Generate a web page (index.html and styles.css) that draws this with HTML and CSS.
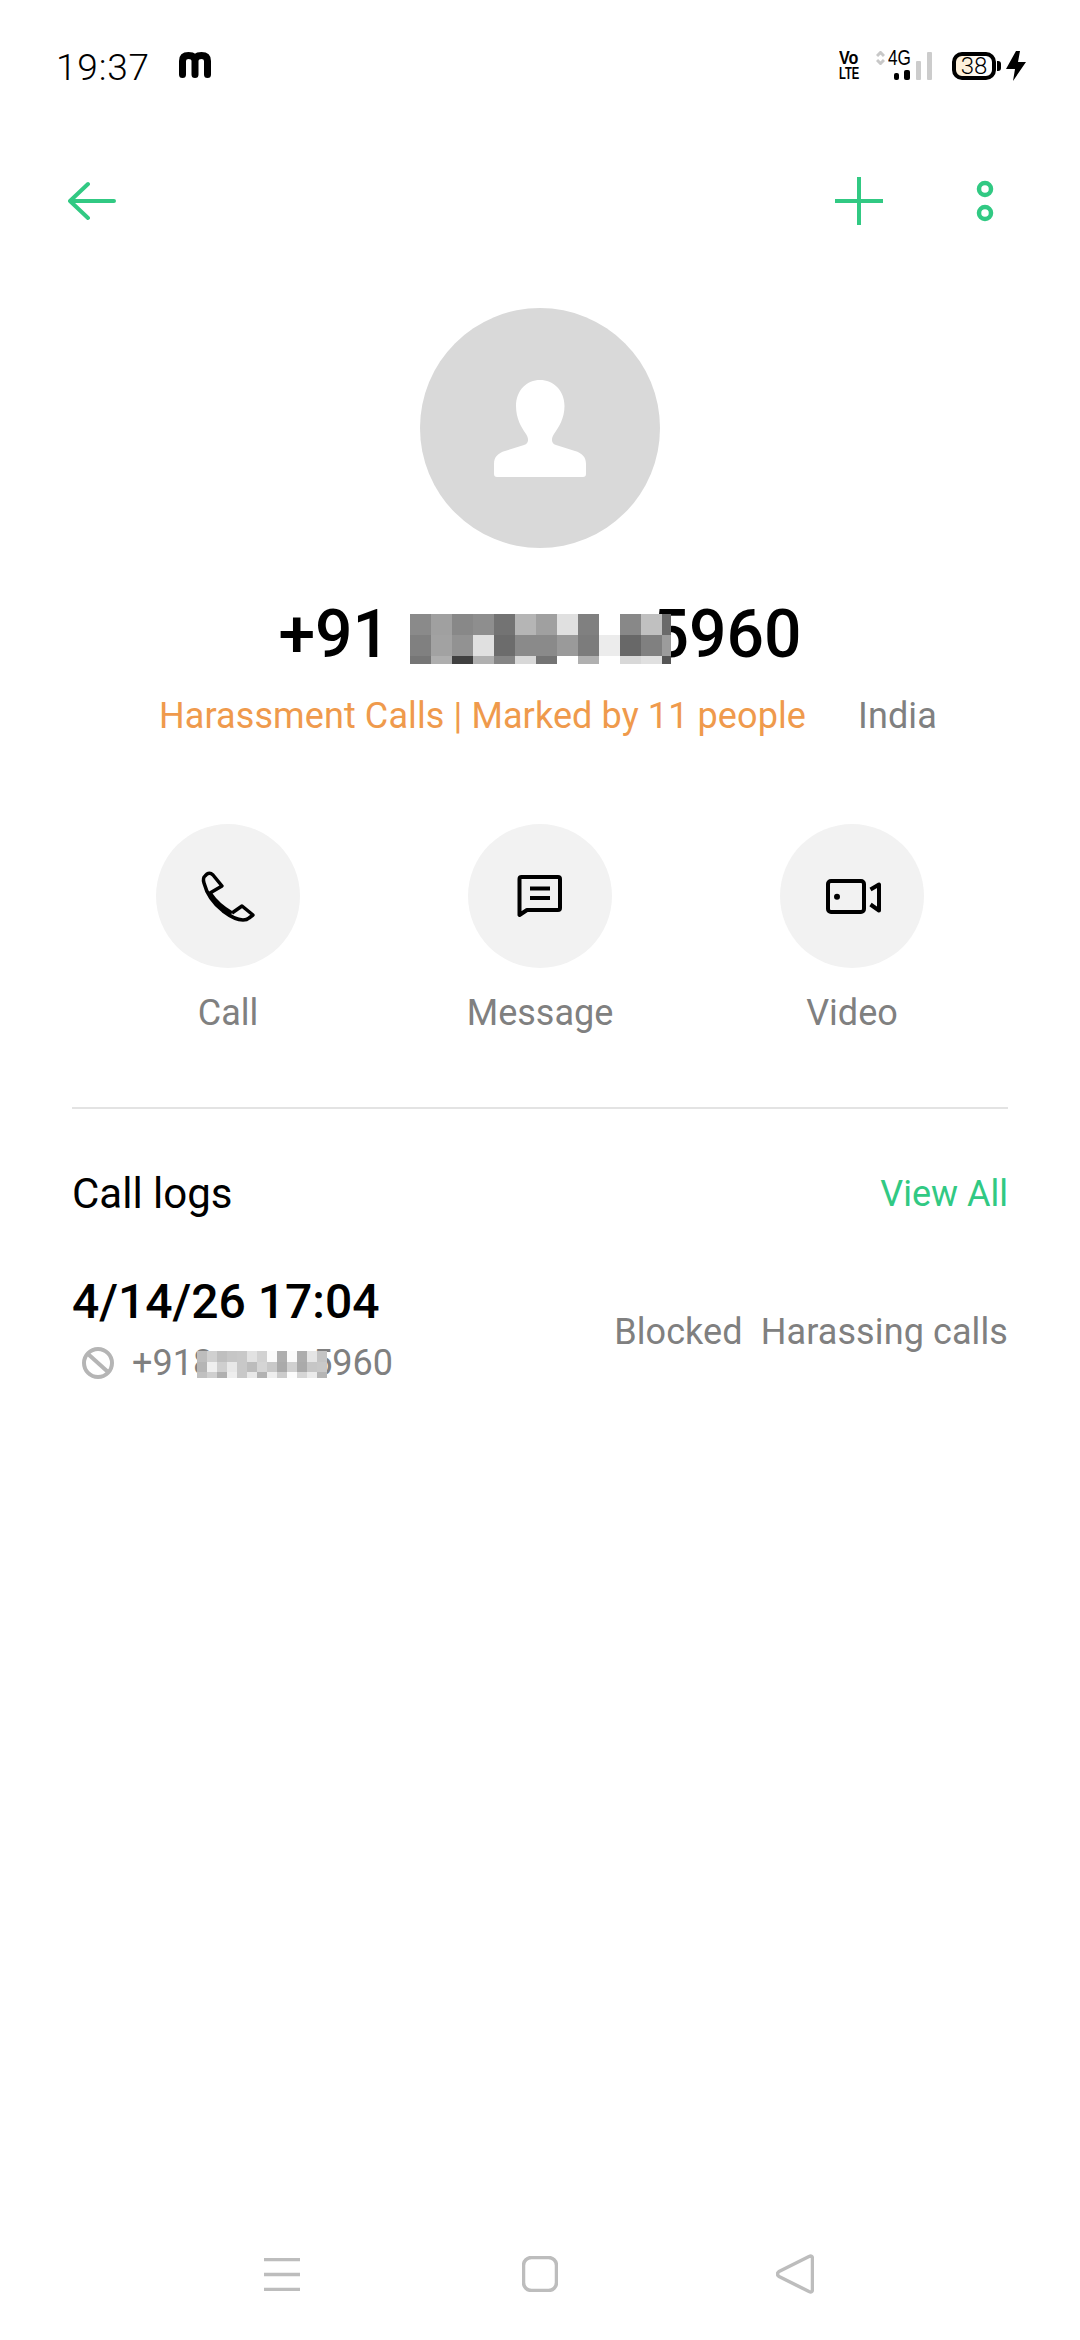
FILE: index.html
```html
<!DOCTYPE html>
<html>
<head>
  <title>Contact details</title>
  <link rel="stylesheet" href="styles.css">
</head>
<body>
  <div class="screen">
    <div class="status">
      <span class="time">19:37</span>
      <svg class="app-m" width="32" height="26" viewBox="0 0 32 26"><path d="M3.5 22.5V9Q3.5 3.5 9.5 3.5Q16 3.5 16 9V22.5M16 9Q16 3.5 22.5 3.5Q28.5 3.5 28.5 9V22.5"/></svg>
      <div class="status-right">
        <div class="volte">
          <span class="vo">Vo</span>
          <span class="lte">LTE</span>
        </div>
        <svg class="net-arrows" width="9" height="14" viewBox="0 0 9 14"><path d="M1 5l3.5-3.5L8 5M1 9l3.5 3.5L8 9"/></svg>
        <div class="signal">
          <span class="net-4g">4G</span>
          <svg width="44" height="30" viewBox="0 0 44 30">
            <rect x="6" y="22" width="5" height="7" rx="2" fill="#000"/>
            <rect x="16" y="19" width="6" height="10" rx="2" fill="#000"/>
            <rect x="28" y="10" width="5" height="19" rx="1" fill="#cccccc"/>
            <rect x="39" y="1" width="5" height="28" rx="1" fill="#cccccc"/>
          </svg>
        </div>
        <div class="battery">38</div>
        <svg class="bolt" width="20" height="30" viewBox="0 0 20 30"><polygon points="10,0 14,0 12,11 20,11 7,30 9,18 0,18"/></svg>
      </div>
    </div>

    <div class="toolbar">
      <svg width="48" height="40" viewBox="0 0 48 40"><path class="green-line" d="M2 20H46M20 3L2 20L20 37"/></svg>
      <div class="toolbar-right">
        <svg width="48" height="48" viewBox="0 0 48 48"><path class="green-plus" d="M24 0V48M0 24H48"/></svg>
        <svg width="18" height="42" viewBox="0 0 18 42"><circle class="green-dot" cx="9" cy="9" r="6"/><circle class="green-dot" cx="9" cy="33" r="6"/></svg>
      </div>
    </div>

    <div class="avatar">
      <svg width="92" height="97" viewBox="494 379 92 97"><path fill="#fff" d="M540 379C553 379 564.5 389 564.5 405C564.5 417 559 426 554 433C551 438 551 442 556 444L575 450C582 452 586 456 586 463V473Q586 476 583 476H497Q494 476 494 473V463C494 456 498 452 505 450L524 444C529 442 529 438 526 433C521 426 516 417 516 405C516 389 527 379 540 379Z"/></svg>
    </div>

    <div class="name">+91 <svg class="mosaic" width="261" height="50" viewBox="0 0 261 50" shape-rendering="crispEdges">
      <rect x="0" y="0" width="21" height="21" fill="#8a8a8a"/><rect x="21" y="0" width="21" height="21" fill="#a0a0a0"/><rect x="42" y="0" width="21" height="21" fill="#888888"/><rect x="63" y="0" width="21" height="21" fill="#8e8e8e"/><rect x="84" y="0" width="21" height="21" fill="#737373"/><rect x="105" y="0" width="21" height="21" fill="#b5b5b5"/><rect x="126" y="0" width="21" height="21" fill="#a0a0a0"/><rect x="147" y="0" width="21" height="21" fill="#e0e0e0"/><rect x="168" y="0" width="21" height="21" fill="#808080"/><rect x="189" y="0" width="21" height="21" fill="#ffffff"/><rect x="210" y="0" width="21" height="21" fill="#888888"/><rect x="231" y="0" width="21" height="21" fill="#c0c0c0"/><rect x="252" y="0" width="9" height="21" fill="#6a6a6a"/>
      <rect x="0" y="21" width="21" height="21" fill="#808080"/><rect x="21" y="21" width="21" height="21" fill="#a2a2a2"/><rect x="42" y="21" width="21" height="21" fill="#929292"/><rect x="63" y="21" width="21" height="21" fill="#e0e0e0"/><rect x="84" y="21" width="21" height="21" fill="#6c6c6c"/><rect x="105" y="21" width="21" height="21" fill="#8a8a8a"/><rect x="126" y="21" width="21" height="21" fill="#8a8a8a"/><rect x="147" y="21" width="21" height="21" fill="#9a9a9a"/><rect x="168" y="21" width="21" height="21" fill="#7c7c7c"/><rect x="189" y="21" width="21" height="21" fill="#ececec"/><rect x="210" y="21" width="21" height="21" fill="#686868"/><rect x="231" y="21" width="21" height="21" fill="#808080"/><rect x="252" y="21" width="9" height="21" fill="#9c9c9c"/>
      <rect x="0" y="42" width="21" height="8" fill="#767676"/><rect x="21" y="42" width="21" height="8" fill="#aeaeae"/><rect x="42" y="42" width="21" height="8" fill="#404040"/><rect x="63" y="42" width="21" height="8" fill="#b0b0b0"/><rect x="84" y="42" width="21" height="8" fill="#858585"/><rect x="105" y="42" width="21" height="8" fill="#d8d8d8"/><rect x="126" y="42" width="21" height="8" fill="#747474"/><rect x="147" y="42" width="21" height="8" fill="#ffffff"/><rect x="168" y="42" width="21" height="8" fill="#b0b0b0"/><rect x="189" y="42" width="21" height="8" fill="#ffffff"/><rect x="210" y="42" width="21" height="8" fill="#d8d8d8"/><rect x="231" y="42" width="21" height="8" fill="#e0e0e0"/><rect x="252" y="42" width="9" height="8" fill="#555555"/>
    </svg>5960</div>

    <div class="tag-row">
      <span class="tag">Harassment Calls | Marked by 11 people</span>
      <span class="region">India</span>
    </div>

    <div class="actions">
      <div class="action">
        <div class="action-icon">
          <svg width="76" height="90" viewBox="0 0 76 90"><path class="icon-line thin" d="M20 42L32 35L23 24Q20 21 17 23L15 25Q12.5 27 14 32Q18 48 33 60Q45 69 53 69Q57 69 59 67L63 64L52 55L42 62M20 42Q28 54 42 62"/></svg>
        </div>
        <span class="action-label">Call</span>
      </div>
      <div class="action">
        <div class="action-icon">
          <svg width="80" height="90" viewBox="0 0 80 90"><path class="icon-line" d="M19.5 64V28Q19.5 26 21.5 26H58Q60 26 60 28V57Q60 59 58 59H27L19.5 64ZM30 37.5H50M30 47H50"/></svg>
        </div>
        <span class="action-label">Message</span>
      </div>
      <div class="action">
        <div class="action-icon">
          <svg width="84" height="90" viewBox="0 0 84 90"><rect class="icon-line" x="18" y="30" width="36" height="31" rx="3"/><circle cx="27" cy="45.7" r="3"/><path class="icon-line" d="M60.5 38.5L69 33.5V59.5L60.5 53.5"/></svg>
        </div>
        <span class="action-label">Video</span>
      </div>
    </div>

    <div class="divider"></div>

    <div class="logs-head">
      <span class="logs-title">Call logs</span>
      <span class="view-all">View All</span>
    </div>

    <div class="log-row">
      <div class="log-left">
        <div class="log-date">4/14/26 17:04</div>
        <div class="log-number">
          <svg width="32" height="32" viewBox="0 0 32 32"><circle class="block-line" cx="16" cy="16" r="14"/><path class="block-line" d="M6 7L26 25"/></svg>
          <span class="number-text">+918<svg class="mosaic-small" width="130" height="27" viewBox="0 0 130 27" shape-rendering="crispEdges">
            <rect x="0" y="0" width="10" height="11" fill="#bdbdbd"/><rect x="10" y="0" width="10" height="11" fill="#d0d0d0"/><rect x="20" y="0" width="10" height="11" fill="#bfbfbf"/><rect x="30" y="0" width="10" height="11" fill="#c6c6c6"/><rect x="40" y="0" width="10" height="11" fill="#c8c8c8"/><rect x="50" y="0" width="10" height="11" fill="#e2e2e2"/><rect x="60" y="0" width="10" height="11" fill="#d2d2d2"/><rect x="70" y="0" width="10" height="11" fill="#fbfbfb"/><rect x="80" y="0" width="10" height="11" fill="#aeaeae"/><rect x="90" y="0" width="10" height="11" fill="#fbfbfb"/><rect x="100" y="0" width="10" height="11" fill="#adadad"/><rect x="110" y="0" width="10" height="11" fill="#e5e5e5"/><rect x="120" y="0" width="10" height="11" fill="#c4c4c4"/>
            <rect x="0" y="11" width="10" height="10" fill="#b5b5b5"/><rect x="10" y="11" width="10" height="10" fill="#efefef"/><rect x="20" y="11" width="10" height="10" fill="#cfcfcf"/><rect x="30" y="11" width="10" height="10" fill="#e8e8e8"/><rect x="40" y="11" width="10" height="10" fill="#c8c8c8"/><rect x="50" y="11" width="10" height="10" fill="#bcbcbc"/><rect x="60" y="11" width="10" height="10" fill="#d5d5d5"/><rect x="70" y="11" width="10" height="10" fill="#c8c8c8"/><rect x="80" y="11" width="10" height="10" fill="#aaaaaa"/><rect x="90" y="11" width="10" height="10" fill="#d0d0d0"/><rect x="100" y="11" width="10" height="10" fill="#aaaaaa"/><rect x="110" y="11" width="10" height="10" fill="#c6c6c6"/><rect x="120" y="11" width="10" height="10" fill="#c8c8c8"/>
            <rect x="0" y="21" width="10" height="6" fill="#c0c0c0"/><rect x="10" y="21" width="10" height="6" fill="#cfcfcf"/><rect x="20" y="21" width="10" height="6" fill="#b0b0b0"/><rect x="30" y="21" width="10" height="6" fill="#eeeeee"/><rect x="40" y="21" width="10" height="6" fill="#c8c8c8"/><rect x="50" y="21" width="10" height="6" fill="#e8e8e8"/><rect x="60" y="21" width="10" height="6" fill="#b2b2b2"/><rect x="70" y="21" width="10" height="6" fill="#eeeeee"/><rect x="80" y="21" width="10" height="6" fill="#cccccc"/><rect x="90" y="21" width="10" height="6" fill="#fcfcfc"/><rect x="100" y="21" width="10" height="6" fill="#d6d6d6"/><rect x="110" y="21" width="10" height="6" fill="#ebebeb"/><rect x="120" y="21" width="10" height="6" fill="#b5b5b5"/>
          </svg>5960</span>
        </div>
      </div>
      <div class="log-status">
        <span>Blocked</span>
        <span>Harassing calls</span>
      </div>
    </div>

    <div class="navbar">
      <svg width="36" height="33" viewBox="0 0 36 33"><path class="nav-line" d="M0 1.5H36M0 16.5H36M0 31.5H36"/></svg>
      <svg class="nav-home" width="36" height="36" viewBox="0 0 36 36"><rect class="nav-line" x="1.5" y="1.5" width="33" height="33" rx="8"/></svg>
      <svg width="38" height="40" viewBox="0 0 38 40"><path class="nav-line" d="M33 2.5Q36.5 1 36.5 5V35Q36.5 39 33 37.5L3 22.5Q0 20 3 17.5Z"/></svg>
    </div>
  </div>
</body>
</html>
```

FILE: styles.css
```css
body {
  margin: 0;
  background: #fff;
  font-family: Roboto, "Noto Sans", sans-serif;
}
.screen {
  width: 1080px;
  height: 2340px;
  display: flex;
  flex-direction: column;
  overflow: hidden;
}
.status {
  height: 132px;
  display: flex;
  align-items: center;
  padding: 2px 54px 0 56px;
  box-sizing: border-box;
}
.time {
  font-size: 37px;
  font-weight: 300;
  letter-spacing: 0.8px;
  color: #000;
}
.app-m {
  margin-left: 29px;
  margin-bottom: 4px;
}
.app-m path {
  fill: none;
  stroke: #000;
  stroke-width: 7;
  stroke-linecap: round;
}
.status-right {
  margin-left: auto;
  display: flex;
  align-items: center;
  margin-top: -2px;
}
.volte {
  width: 22px;
  font-family: "Liberation Sans", sans-serif;
  font-weight: 700;
  line-height: 16px;
}
.vo,
.lte {
  display: block;
  width: 22px;
  height: 16px;
  white-space: nowrap;
  transform-origin: left center;
}
.vo {
  font-size: 19px;
  transform: scaleX(0.85);
}
.lte {
  font-size: 17px;
  transform: scaleX(0.66);
}
.net-arrows {
  margin: 0 3px 16px 15px;
}
.net-arrows path {
  fill: none;
  stroke: #c8c8c8;
  stroke-width: 3;
}
.signal {
  position: relative;
  width: 44px;
  height: 30px;
}
.net-4g {
  position: absolute;
  left: 0;
  top: -3px;
  font-family: "Liberation Sans", sans-serif;
  font-size: 22px;
  line-height: 20px;
  transform: scaleX(0.78);
  transform-origin: left center;
}
.battery {
  margin-left: 20px;
  width: 32px;
  height: 20px;
  padding: 0 2px;
  border: 4px solid #000;
  border-radius: 10px;
  background: linear-gradient(90deg, #fdf0da 0, #fdf0da 30%, #fff 60%);
  font-size: 24px;
  font-weight: 300;
  line-height: 20px;
  text-align: center;
  position: relative;
}
.battery::after {
  content: "";
  position: absolute;
  right: -9px;
  top: 5px;
  width: 4px;
  height: 10px;
  background: #000;
  border-radius: 0 3px 3px 0;
}
.bolt {
  margin-left: 10px;
}
.toolbar {
  height: 138px;
  display: flex;
  align-items: center;
  justify-content: space-between;
  padding: 0 86px 0 68px;
  box-sizing: border-box;
}
.toolbar-right {
  display: flex;
  align-items: center;
  gap: 93px;
}
.green-line {
  fill: none;
  stroke: #31c983;
  stroke-width: 4;
  stroke-linecap: round;
  stroke-linejoin: round;
}
.green-plus {
  fill: none;
  stroke: #31c983;
  stroke-width: 4;
}
.green-dot {
  fill: none;
  stroke: #31c983;
  stroke-width: 4.5;
}
.avatar {
  width: 240px;
  height: 240px;
  margin: 38px auto 0;
  border-radius: 50%;
  background: #d9d9d9;
  display: flex;
  align-items: center;
  justify-content: center;
}
.name {
  margin-top: 49px;
  height: 76px;
  font-size: 66px;
  font-weight: 500;
  line-height: 76px;
  color: #000;
  text-align: center;
  white-space: nowrap;
}
.mosaic {
  vertical-align: -7px;
  margin-left: 3px;
  margin-right: -19px;
  position: relative;
}
.tag-row {
  margin-top: 19px;
  padding-left: 159px;
  display: flex;
  gap: 52px;
  font-size: 36px;
  letter-spacing: 0.1px;
  line-height: 48px;
}
.tag {
  color: #ef9a4c;
}
.region {
  color: #808080;
}
.actions {
  margin-top: 84px;
  display: grid;
  grid-template-columns: repeat(3, 312px);
  justify-content: center;
}
.action {
  display: flex;
  flex-direction: column;
  align-items: center;
  gap: 23px;
}
.action-icon {
  width: 144px;
  height: 144px;
  border-radius: 50%;
  background: #f2f2f2;
  display: flex;
  align-items: center;
  justify-content: center;
}
.action-label {
  font-size: 36px;
  line-height: 44px;
  color: #808080;
}
.icon-line {
  fill: none;
  stroke: #000;
  stroke-width: 4;
  stroke-linejoin: round;
}
.icon-line.thin {
  stroke-width: 3.5;
}
.divider {
  margin: 72px 72px 0;
  height: 2px;
  background: #e3e3e3;
}
.logs-head {
  margin-top: 61px;
  padding: 0 72px;
  display: flex;
  align-items: center;
  justify-content: space-between;
  line-height: 48px;
}
.logs-title {
  font-size: 42px;
  color: #000;
}
.view-all {
  font-size: 36px;
  color: #31c983;
}
.log-row {
  margin-top: 56px;
  padding: 0 72px;
  display: flex;
  align-items: center;
  justify-content: space-between;
}
.log-date {
  font-size: 48px;
  font-weight: 500;
  line-height: 56px;
  color: #000;
}
.log-number {
  margin-top: 11px;
  display: flex;
  align-items: center;
  gap: 18px;
  padding-left: 10px;
  height: 44px;
}
.number-text {
  font-size: 36px;
  color: #808080;
  white-space: nowrap;
}
.mosaic-small {
  vertical-align: -3px;
  margin-left: -16px;
  margin-right: -15px;
  position: relative;
}
.block-line {
  fill: none;
  stroke: #b5b5b5;
  stroke-width: 4;
}
.log-status {
  padding-top: 5px;
  display: flex;
  gap: 18px;
  font-size: 36px;
  letter-spacing: 0.1px;
  color: #808080;
}
.navbar {
  margin-top: auto;
  height: 132px;
  padding: 0 266px 0 264px;
  box-sizing: border-box;
  display: flex;
  align-items: center;
  justify-content: space-between;
}
.nav-home {
  margin-left: 4px;
}
.nav-line {
  fill: none;
  stroke: #bdbdbd;
  stroke-width: 3.5;
  stroke-linejoin: round;
}
```
